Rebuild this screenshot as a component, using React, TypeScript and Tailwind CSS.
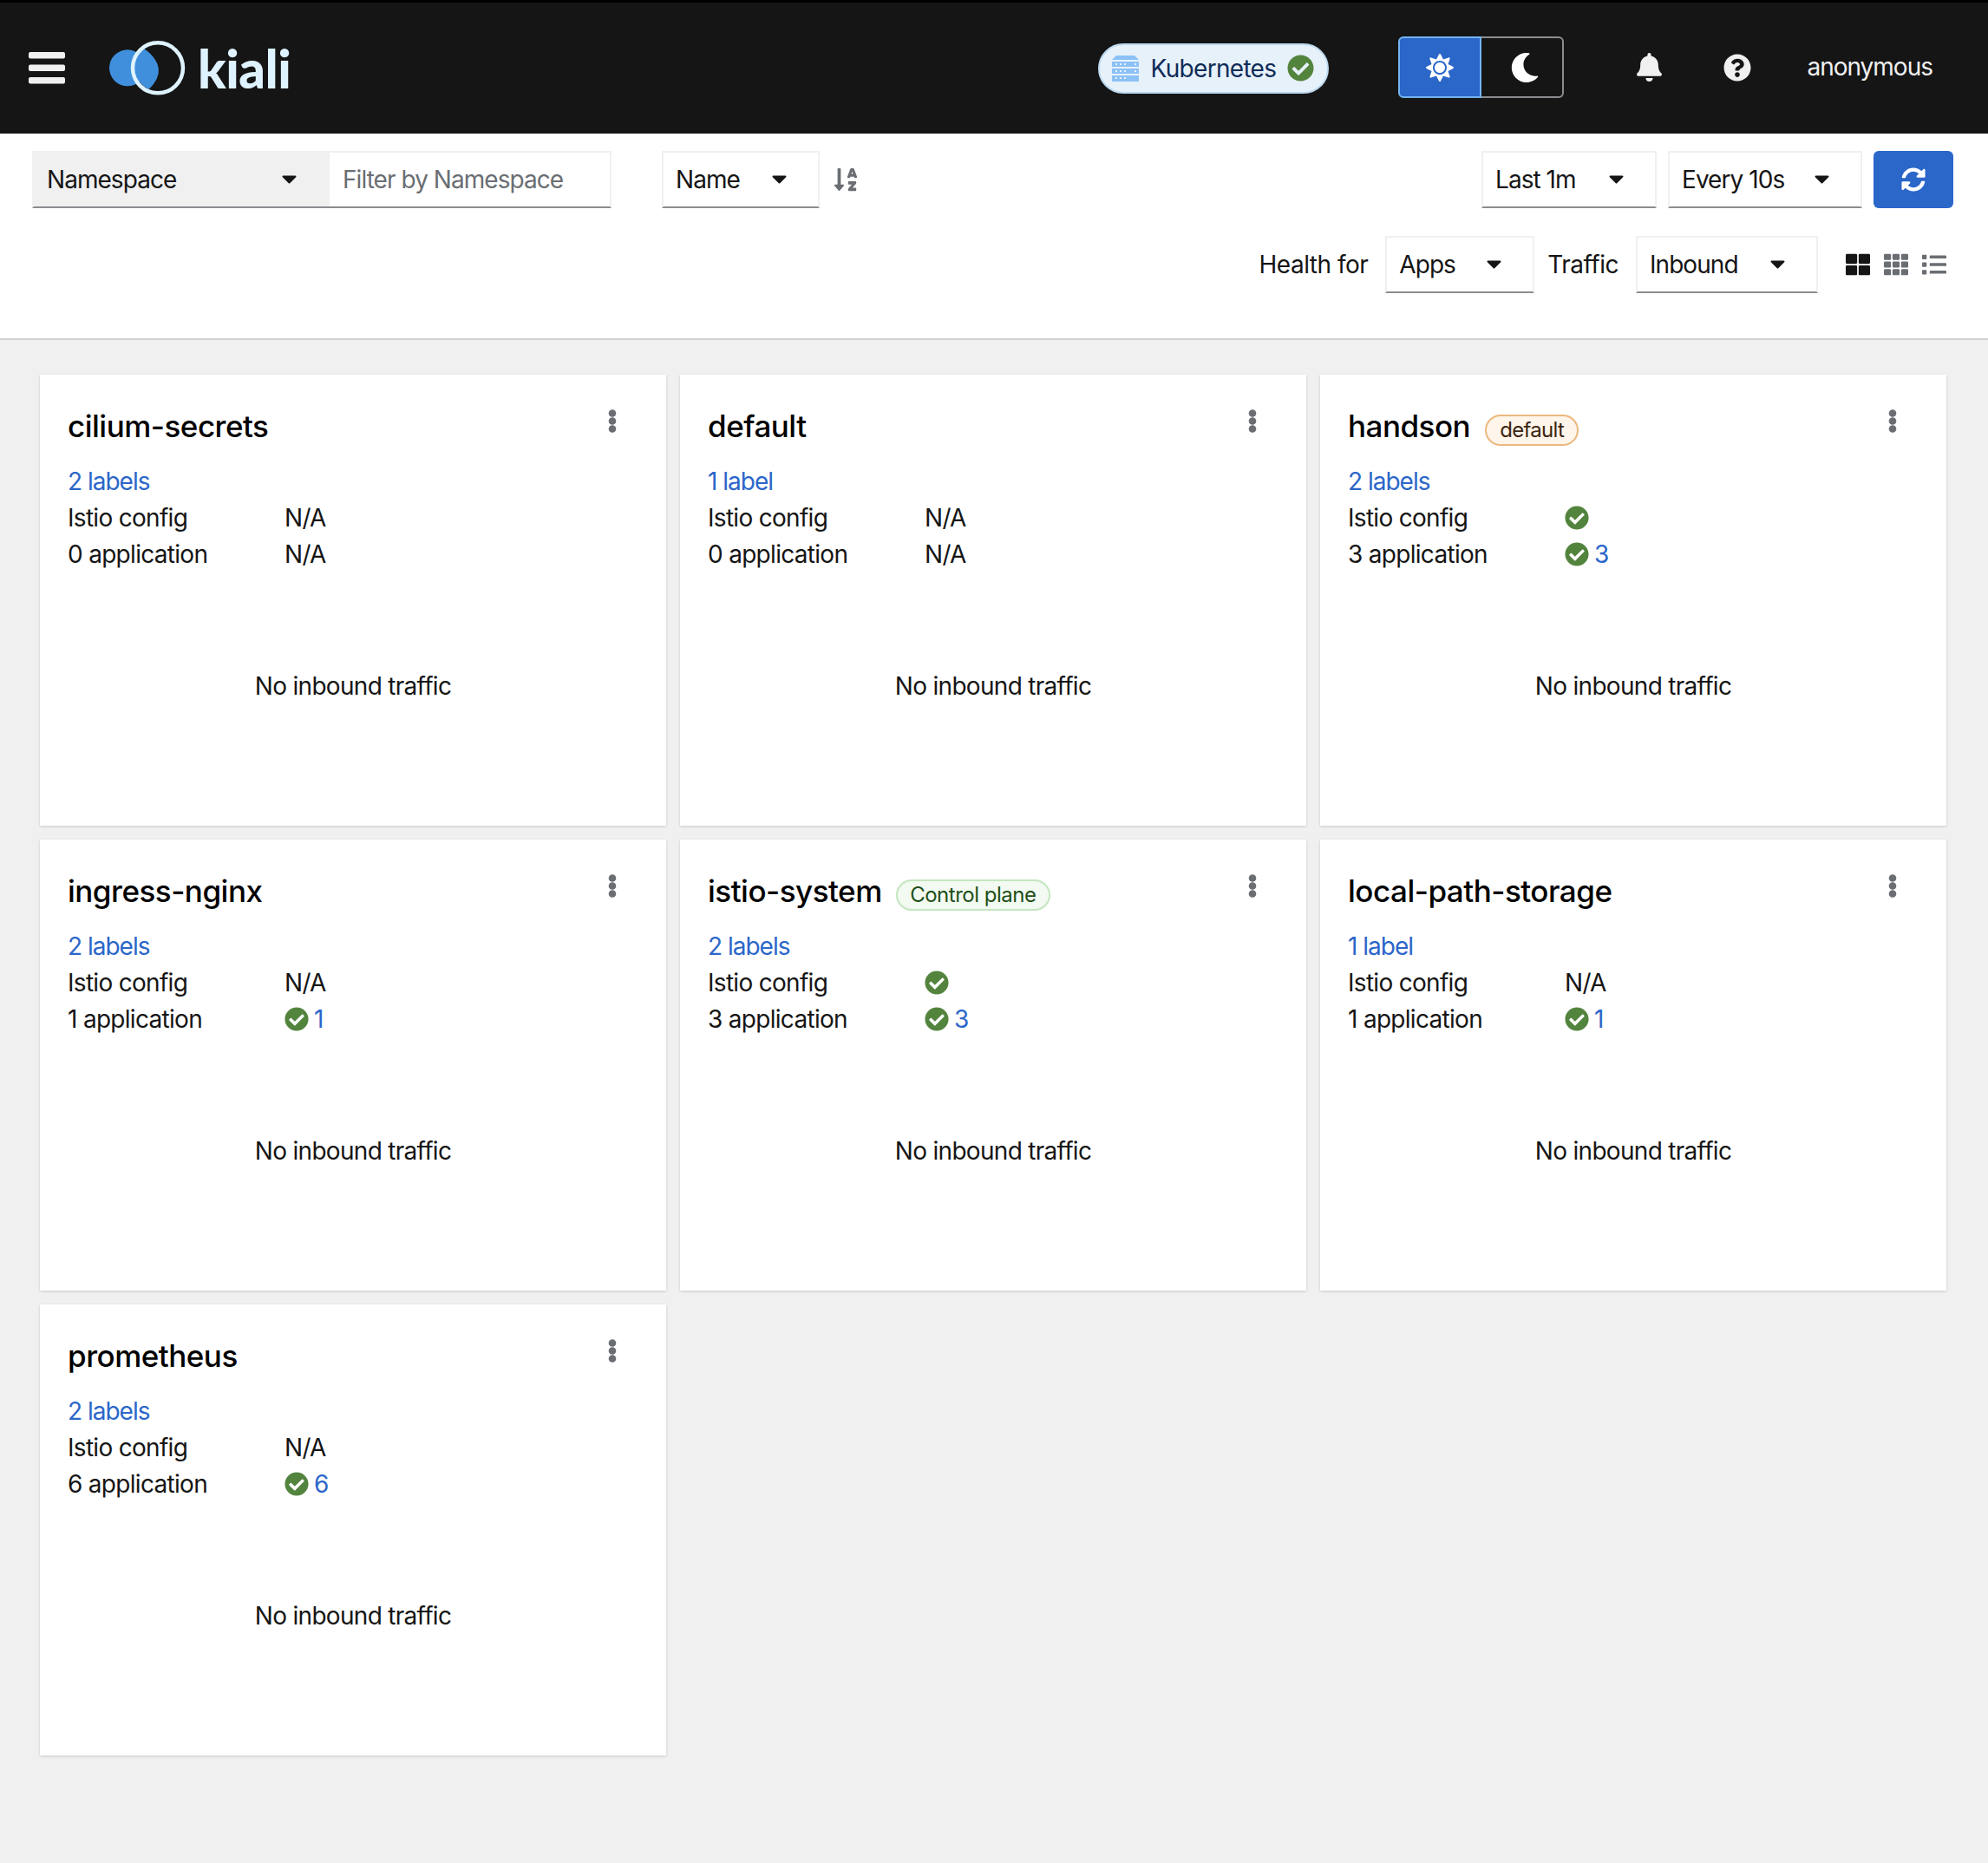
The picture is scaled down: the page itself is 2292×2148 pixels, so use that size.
import React from 'react';
import { FaBell, FaQuestionCircle, FaCheckCircle, FaSun, FaMoon, FaSyncAlt, FaTh, FaThLarge, FaList, FaSortAlphaDown } from 'react-icons/fa';

type Ns = {
  name: string;
  labels: string;
  istio: boolean;
  apps: number;
  badge?: 'default' | 'control';
};

const namespaces: Ns[] = [
  { name: 'cilium-secrets', labels: '2 labels', istio: false, apps: 0 },
  { name: 'default', labels: '1 label', istio: false, apps: 0 },
  { name: 'handson', labels: '2 labels', istio: true, apps: 3, badge: 'default' },
  { name: 'ingress-nginx', labels: '2 labels', istio: false, apps: 1 },
  { name: 'istio-system', labels: '2 labels', istio: true, apps: 3, badge: 'control' },
  { name: 'local-path-storage', labels: '1 label', istio: false, apps: 1 },
  { name: 'prometheus', labels: '2 labels', istio: false, apps: 6 },
];

const Caret = () => (
  <svg width="17" height="10" viewBox="0 0 17 10" className="shrink-0 text-[#151515]">
    <path d="M1.5 0.5h14a1 1 0 0 1 .7 1.7l-7 7a1 1 0 0 1-1.4 0l-7-7a1 1 0 0 1 .7-1.7z" fill="currentColor" />
  </svg>
);

const Select: React.FC<{ label: string; className: string }> = ({ label, className }) => (
  <div className={`flex items-center justify-between h-[66px] pl-[14px] pr-[36px] border-2 border-[#f0f0f0] border-b-[#8a8d90] bg-white tracking-[-0.95px] ${className}`}>
    <span>{label}</span>
    <Caret />
  </div>
);

const Check = () => <FaCheckCircle size={28} className="text-[#53843e] shrink-0" />;

const NamespaceCard: React.FC<{ ns: Ns }> = ({ ns }) => (
  <div className="flex flex-col h-[520px] bg-white p-8 shadow-[0_1px_3px_rgba(3,3,3,0.16)]">
    {/* Title */}
    <div className="flex h-[54px] items-center mb-4">
      <h2 className="text-[35px] font-medium text-[#000] leading-none tracking-[-0.5px]">{ns.name}</h2>
      {ns.badge === 'default' && (
        <span className="ml-[17px] mt-[10px] flex items-center justify-center h-[36px] w-[108px] rounded-full border-2 border-[#ecb87f] bg-[#fff5ea] text-[24px] text-[#3b2410]">default</span>
      )}
      {ns.badge === 'control' && (
        <span className="ml-[16px] mt-[10px] flex items-center justify-center h-[36px] w-[178px] rounded-full border-2 border-[#c4e6bf] bg-[#f3faf2] text-[24px] tracking-[-0.5px] text-[#1e4f18]">Control plane</span>
      )}
      <svg width="10" height="27" viewBox="0 0 10 27" className="ml-auto mr-[25px] self-start mt-2 shrink-0 text-[#6a6e73]">
        <circle cx="5" cy="4.5" r="4.3" fill="currentColor" />
        <circle cx="5" cy="13.5" r="4.3" fill="currentColor" />
        <circle cx="5" cy="22.5" r="4.3" fill="currentColor" />
      </svg>
    </div>

    {/* Details */}
    <div className="h-[42px] flex items-center text-[#2b66c9] tracking-[-1px]">{ns.labels}</div>
    <div className="h-[42px] flex items-center">
      <span className="w-[250px]">Istio config</span>
      {ns.istio ? <Check /> : <span>N/A</span>}
    </div>
    <div className="h-[42px] flex items-center">
      <span className="w-[250px]">{ns.apps} application</span>
      {ns.apps > 0 ? (
        <span className="flex items-center gap-[6px]">
          <Check />
          <span className="text-[#2b66c9]">{ns.apps}</span>
        </span>
      ) : (
        <span>N/A</span>
      )}
    </div>

    {/* Traffic */}
    <div className="flex-1 flex items-center justify-center pt-[2px]">No inbound traffic</div>
  </div>
);

const App: React.FC = () => {
  return (
    <div className="min-h-[2148px] flex flex-col bg-[#f0f0f0] text-[28px] text-[#151515] font-['Inter',sans-serif] tracking-[-0.7px]">
      {/* Header */}
      <header className="flex items-center h-[154px] bg-[#151515] border-t-[3px] border-black pr-[64px]">
        <svg width="43" height="38" viewBox="0 0 43 38" className="ml-[33px] shrink-0 text-[#f0f0f0]">
          <rect x="0" y="0" width="42" height="7.5" rx="2" fill="currentColor" />
          <rect x="0" y="14.5" width="42" height="7.5" rx="2" fill="currentColor" />
          <rect x="0" y="29" width="42" height="7.5" rx="2" fill="currentColor" />
        </svg>
        <svg width="92" height="63" viewBox="0 0 92 63" className="ml-[48px] shrink-0">
          <circle cx="23" cy="31.3" r="21" fill="#3f8fdc" />
          <path d="M41 8Q73 31 47.7 56A29 29 0 0 1 41 8Z" fill="#3f8fdc" />
          <circle cx="58" cy="31.3" r="29" fill="none" stroke="#def3ff" strokeWidth="4.5" />
        </svg>
        <span className="ml-[12px] text-[60px] font-black leading-none text-[#def3ff] font-['Lato',sans-serif] tracking-[-0.5px]">kiali</span>

        <div className="ml-auto flex items-center justify-between w-[266px] h-[58px] pl-[14px] pr-[15px] rounded-full border-2 border-[#bcd9ef] bg-[#e7f1fa] text-[#0f2c57]">
          <svg width="31" height="30" viewBox="0 0 31 30" className="shrink-0 text-[#8bc1f7]">
            <path d="M5 0h21l5 5H0z" fill="currentColor" />
            <path fillRule="evenodd" d="M0 7h31v6H0zM0 15h31v6H0zM0 23h31v7H0z" fill="currentColor" />
            <g fill="#e7f1fa">
              <rect x="4" y="9" width="2" height="2" /><rect x="9" y="9" width="2" height="2" /><rect x="14" y="9" width="2" height="2" /><rect x="26" y="9" width="2" height="2" />
              <rect x="4" y="17" width="2" height="2" /><rect x="9" y="17" width="2" height="2" /><rect x="14" y="17" width="2" height="2" /><rect x="26" y="17" width="2" height="2" />
              <rect x="4" y="25" width="2" height="2" /><rect x="9" y="25" width="2" height="2" /><rect x="14" y="25" width="2" height="2" />
            </g>
          </svg>
          <span>Kubernetes</span>
          <FaCheckCircle size={31} className="text-[#53843e] shrink-0" />
        </div>

        <div className="ml-[80px] mb-[2px] flex h-[71px] w-[191px] shrink-0">
          <div className="flex items-center justify-center w-[96px] bg-[#2b66c9] border-2 border-[#73b4f0] rounded-l-[6px]">
            <FaSun size={32} className="text-white" />
          </div>
          <div className="flex items-center justify-center flex-1 pl-[6px] border-2 border-l-0 border-[#8a8d90] rounded-r-[6px]">
            <FaMoon size={34} className="text-white" />
          </div>
        </div>

        <FaBell size={33} className="ml-[82px] mb-[3px] text-[#f0f0f0] shrink-0" />
        <FaQuestionCircle size={32} className="ml-[69px] mb-[2px] text-[#f0f0f0] shrink-0" />
        <span className="ml-[64px] mb-[3px] text-[#f0f0f0] tracking-[-1px]">anonymous</span>
      </header>

      {/* Toolbar */}
      <div className="bg-white border-b-2 border-[#d2d2d2] pt-5 pb-[52px]">
        <div className="flex items-center pl-[37px] pr-[40px]">
          <div className="flex h-[66px] w-[668px] border-2 border-[#f0f0f0] border-b-[#8a8d90] tracking-[-0.95px]">
            <div className="flex items-center justify-between w-[341px] bg-[#f0f0f0] pl-[15px] pr-[38px]">
              <span>Namespace</span>
              <Caret />
            </div>
            <div className="flex items-center pl-[15px] text-[#6a6e73]">Filter by Namespace</div>
          </div>
          <Select label="Name" className="ml-[58px] w-[182px]" />
          <FaSortAlphaDown size={30} className="ml-[15px] text-[#6a6e73]" />
          <Select label="Last 1m" className="ml-auto w-[202px]" />
          <Select label="Every 10s" className="ml-[13px] w-[224px]" />
          <div className="ml-[13px] flex items-center justify-center w-[92px] h-[66px] bg-[#2b66c9] rounded-[6px]">
            <FaSyncAlt size={28} className="text-white" />
          </div>
        </div>
        <div className="flex items-center justify-end mt-8 pr-[48px]">
          <span className="tracking-[-0.5px]">Health for</span>
          <Select label="Apps" className="ml-5 w-[172px]" />
          <span className="ml-[15px] tracking-[-0.5px]">Traffic</span>
          <Select label="Inbound" className="ml-5 w-[210px]" />
          <FaThLarge size={28} className="ml-8 text-[#151515]" />
          <FaTh size={28} className="ml-4 text-[#6a6e73]" />
          <FaList size={28} className="ml-4 text-[#6a6e73]" />
        </div>
      </div>

      {/* Namespace cards */}
      <main className="grid grid-cols-[722px_722px_722px] gap-4 pl-[46px] pt-10">
        {namespaces.map((ns) => (
          <NamespaceCard key={ns.name} ns={ns} />
        ))}
      </main>
    </div>
  );
};

export default App;
